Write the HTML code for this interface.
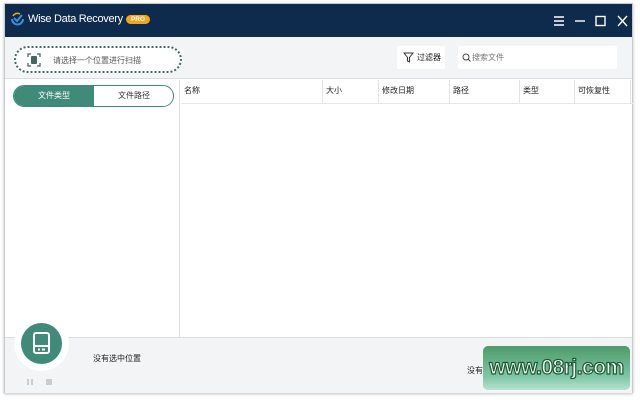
<!DOCTYPE html>
<html><head><meta charset="utf-8"><style>
*{margin:0;padding:0;box-sizing:border-box}
body{width:640px;height:400px;background:#fff;position:relative;overflow:hidden;font-family:"Liberation Sans","Noto Sans CJK SC",sans-serif;font-size:8px;color:#222}
.win{position:absolute;left:4px;top:3px;width:629px;height:390px;border:1px solid #c8cacc;background:#fff;box-shadow:0 1px 3px rgba(0,0,0,.25)}
.title{position:absolute;left:0;top:0;width:100%;height:33px;background:#0e2a4c;color:#fff}
.title .t{position:absolute;left:23px;top:9px;font-size:11px;letter-spacing:-0.3px}
.pro{position:absolute;left:121px;top:11px;width:24px;height:9px;border-radius:5px;background:#f3a51c;color:#fff;font-size:6.5px;line-height:9px;text-align:center;font-weight:bold}
.tool{position:absolute;left:0;top:33px;width:100%;height:42px;background:#f3f4f6;border-bottom:1px solid #dcdde0}
.scan{position:absolute;left:9px;top:9px;width:168px;height:27px;border:2px dotted #3f6a60;border-radius:14px;background:#fff}
.scan span{position:absolute;left:37px;top:7px;font-size:8px;color:#555}
.filt{position:absolute;left:392px;top:9px;width:48px;height:23px;background:#fff;border-radius:2px}
.filt span{position:absolute;left:20px;top:6px;font-size:8px}
.search{position:absolute;left:453px;top:9px;width:159px;height:23px;background:#fff;border-radius:2px}
.search span{position:absolute;left:14px;top:6px;font-size:8px;color:#777}
.left{position:absolute;left:0;top:76px;width:175px;height:257px;background:#fff;border-right:1px solid #dcdde0}
.tabs{position:absolute;left:8px;top:5px;width:161px;height:22px;border:1px solid #3f8a78;border-radius:11px;overflow:hidden;background:#fff}
.tabs .a{position:absolute;left:0;top:0;width:80px;height:100%;background:#3f8a78;color:#fff;text-align:center;line-height:20px}
.tabs .b{position:absolute;left:80px;top:0;width:80px;height:100%;text-align:center;line-height:20px;color:#333}
.hdr{position:absolute;left:176px;top:76px;width:452px;height:24px;border-bottom:1px solid #e6e6e6}
.hdr div{position:absolute;top:0;height:24px;line-height:22px;padding-left:3px;border-right:1px solid #e3e3e3;font-size:8px}
.bottom{position:absolute;left:0;top:333px;width:100%;height:56px;background:#f3f4f6;border-top:1px solid #dcdde0}
.circ{position:absolute;left:14px;top:316px;width:55px;height:55px;border-radius:50%;background:#fff}
.circ .in{position:absolute;left:7px;top:7px;width:41px;height:41px;border-radius:50%;background:#3f8a78}
.wm{position:absolute;left:483px;top:346px;width:147px;height:44px;border-radius:5px;background:linear-gradient(#4e9a6a,#7fc6a6 70%,#b6e3d0);color:#fff;font-size:21px;font-weight:bold;text-align:center;line-height:44px;font-family:"Liberation Sans",sans-serif;-webkit-text-stroke:1.2px #1a5a30;letter-spacing:-0.5px}
</style></head><body>
<div class="win">
 <div class="title">
  <svg style="position:absolute;left:5px;top:8px" width="15" height="15" viewBox="0 0 15 15"><path d="M2 7a5.5 5.5 0 0 0 11 0" fill="none" stroke="#3a8fd8" stroke-width="2"/><path d="M4 6l3 3 5-6" fill="none" stroke="#3a8fd8" stroke-width="2"/><path d="M3 4a5 5 0 0 1 7-2" fill="none" stroke="#f3a51c" stroke-width="1.6"/></svg>
  <div class="t">Wise Data Recovery</div><div class="pro">PRO</div>
  <svg style="position:absolute;left:548px;top:11px" width="76" height="12" viewBox="0 0 76 12"><g stroke="#fff" stroke-width="1.4" fill="none"><path d="M1 2h10M1 6h10M1 10h10"/><path d="M22 6h10"/><rect x="43" y="1.5" width="9" height="9"/><path d="M65 1l9 10M74 1l-9 10"/></g></svg>
 </div>
 <div class="tool">
  <div class="scan"><svg style="position:absolute;left:11px;top:5px" width="14" height="14" viewBox="0 0 14 14"><path d="M1 4V1h3M10 1h3v3M13 10v3h-3M4 13H1v-3" fill="none" stroke="#3f6a60" stroke-width="1.3"/><rect x="4" y="3" width="6" height="8" rx="1" fill="#3f6a60"/></svg><span>请选择一个位置进行扫描</span></div>
  <div class="filt"><svg style="position:absolute;left:6px;top:6px" width="11" height="11" viewBox="0 0 11 11"><path d="M1 1h9L6.5 5.5V10L4.5 9V5.5z" fill="none" stroke="#333" stroke-width="1"/></svg><span>过滤器</span></div>
  <div class="search"><svg style="position:absolute;left:4px;top:7px" width="9" height="9" viewBox="0 0 9 9"><circle cx="4" cy="4" r="3" fill="none" stroke="#444" stroke-width="1"/><path d="M6 6l2.5 2.5" stroke="#444"/></svg><span>搜索文件</span></div>
 </div>
 <div class="left"><div class="tabs"><div class="a">文件类型</div><div class="b">文件路径</div></div></div>
 <div class="hdr">
  <div style="left:0;width:142px">名称</div>
  <div style="left:142px;width:56px">大小</div>
  <div style="left:198px;width:71px">修改日期</div>
  <div style="left:269px;width:70px">路径</div>
  <div style="left:339px;width:55px">类型</div>
  <div style="left:394px;width:56px">可恢复性</div>
 </div>
 <div class="bottom">
  <div style="position:absolute;left:88px;top:15px;font-size:8px">没有选中位置</div>
  <div style="position:absolute;left:462px;top:27px;font-size:8px">没有</div>
  <div style="position:absolute;left:22px;top:41px;width:2px;height:6px;background:#ccc"></div>
  <div style="position:absolute;left:26px;top:41px;width:2px;height:6px;background:#ccc"></div>
  <div style="position:absolute;left:41px;top:41px;width:6px;height:6px;background:#ccc"></div>
 </div>
</div>
<div class="circ"><div class="in"><svg style="position:absolute;left:12px;top:9px" width="17" height="22" viewBox="0 0 17 22"><rect x="1" y="1" width="15" height="20" rx="2" fill="none" stroke="#fff" stroke-width="2"/><path d="M1 14h15" stroke="#fff" stroke-width="2"/><rect x="5" y="16.5" width="2" height="2" fill="#fff"/><rect x="9" y="16.5" width="3" height="2" fill="#fff"/></svg></div></div>
<div class="wm">www.08rj.com</div>
</body></html>
